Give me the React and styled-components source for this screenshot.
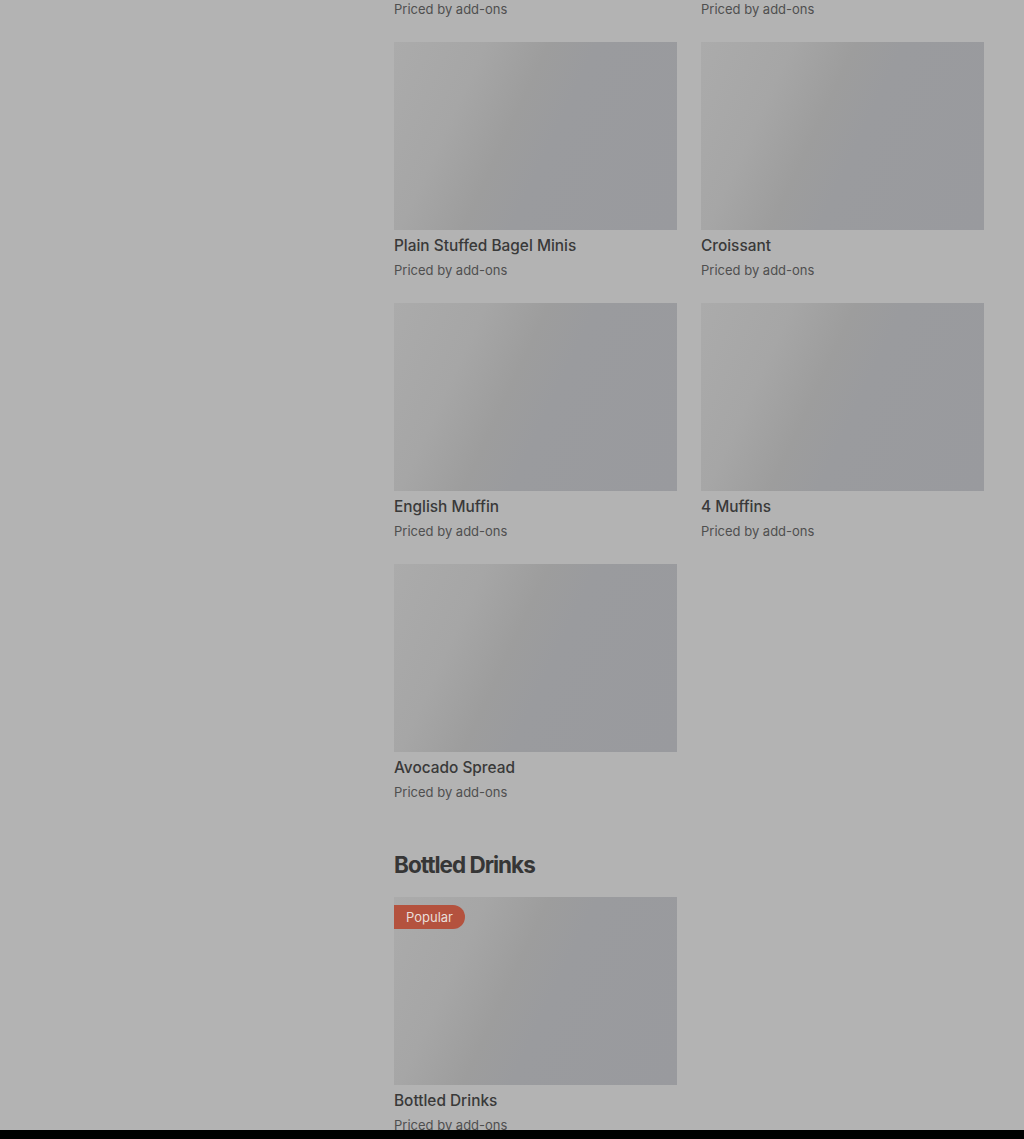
import React from 'react';
import styled, { createGlobalStyle } from 'styled-components';

const GlobalStyle = createGlobalStyle`
  html, body {
    margin: 0;
    padding: 0;
    background: #b3b3b3;
  }
  body {
    font-family: Inter, "Noto Sans", "Liberation Sans", sans-serif;
    color: #3b3b3b;
  }
`;

const Page = styled.div`
  display: flex;
  gap: 40px;
  padding: 0 40px;
  margin-top: -219px;
  height: 1358px;
  overflow: hidden;
`;

const Sidebar = styled.aside`
  width: 314px;
  flex-shrink: 0;
`;

const Menu = styled.main`
  flex: 1;
  display: flex;
  flex-direction: column;
`;

const Section = styled.section`
  display: flex;
  flex-direction: column;
  margin-bottom: 47px;
`;

const SectionTitle = styled.h2`
  margin: 0 0 16px;
  font-size: 22.5px;
  line-height: 32px;
  font-weight: 700;
  letter-spacing: -1px;
  color: #363636;
`;

const Grid = styled.div`
  display: grid;
  grid-template-columns: repeat(2, 283px);
  column-gap: 24px;
  row-gap: 23px;
`;

const Card = styled.div`
  position: relative;
  display: flex;
  flex-direction: column;
`;

const Thumb = styled.div`
  height: 188px;
  background: linear-gradient(
    115deg,
    #ababab 0%,
    #a6a6a6 25%,
    #9d9d9d 42%,
    #9a9b9e 55%,
    #999a9e 100%
  );
`;

const Badge = styled.span`
  position: absolute;
  top: 8px;
  left: 0;
  height: 24px;
  padding: 0 12px;
  display: flex;
  align-items: center;
  background: #b4523e;
  color: #e9ded9;
  font-size: 13px;
  border-radius: 0 12px 12px 0;
`;

const Name = styled.div`
  margin-top: 6px;
  font-size: 15.4px;
  line-height: 20px;
  font-weight: 500;
  color: #393939;
`;

const Price = styled.div`
  margin-top: 5px;
  font-size: 13px;
  line-height: 19px;
  color: #4f4f4f;
`;

const BottomBar = styled.div`
  position: fixed;
  left: 0;
  right: 0;
  bottom: 0;
  height: 9px;
  background: #000;
`;

const bakery = [
  'Everything Bagel Minis',
  'Cinnamon Bagel Minis',
  'Plain Stuffed Bagel Minis',
  'Croissant',
  'English Muffin',
  '4 Muffins',
  'Avocado Spread',
];

const drinks = [{ name: 'Bottled Drinks', popular: true }];

const Item = ({ name, popular }) => (
  <Card>
    <Thumb />
    {popular && <Badge>Popular</Badge>}
    <Name>{name}</Name>
    <Price>Priced by add-ons</Price>
  </Card>
);

export default function App() {
  return (
    <>
      <GlobalStyle />
      <Page>
        <Sidebar />
        <Menu>
          <Section>
            <Grid>
              {bakery.map((n) => (
                <Item key={n} name={n} />
              ))}
            </Grid>
          </Section>
          <Section>
            <SectionTitle>Bottled Drinks</SectionTitle>
            <Grid>
              {drinks.map((d) => (
                <Item key={d.name} name={d.name} popular={d.popular} />
              ))}
            </Grid>
          </Section>
        </Menu>
      </Page>
      <BottomBar />
    </>
  );
}
